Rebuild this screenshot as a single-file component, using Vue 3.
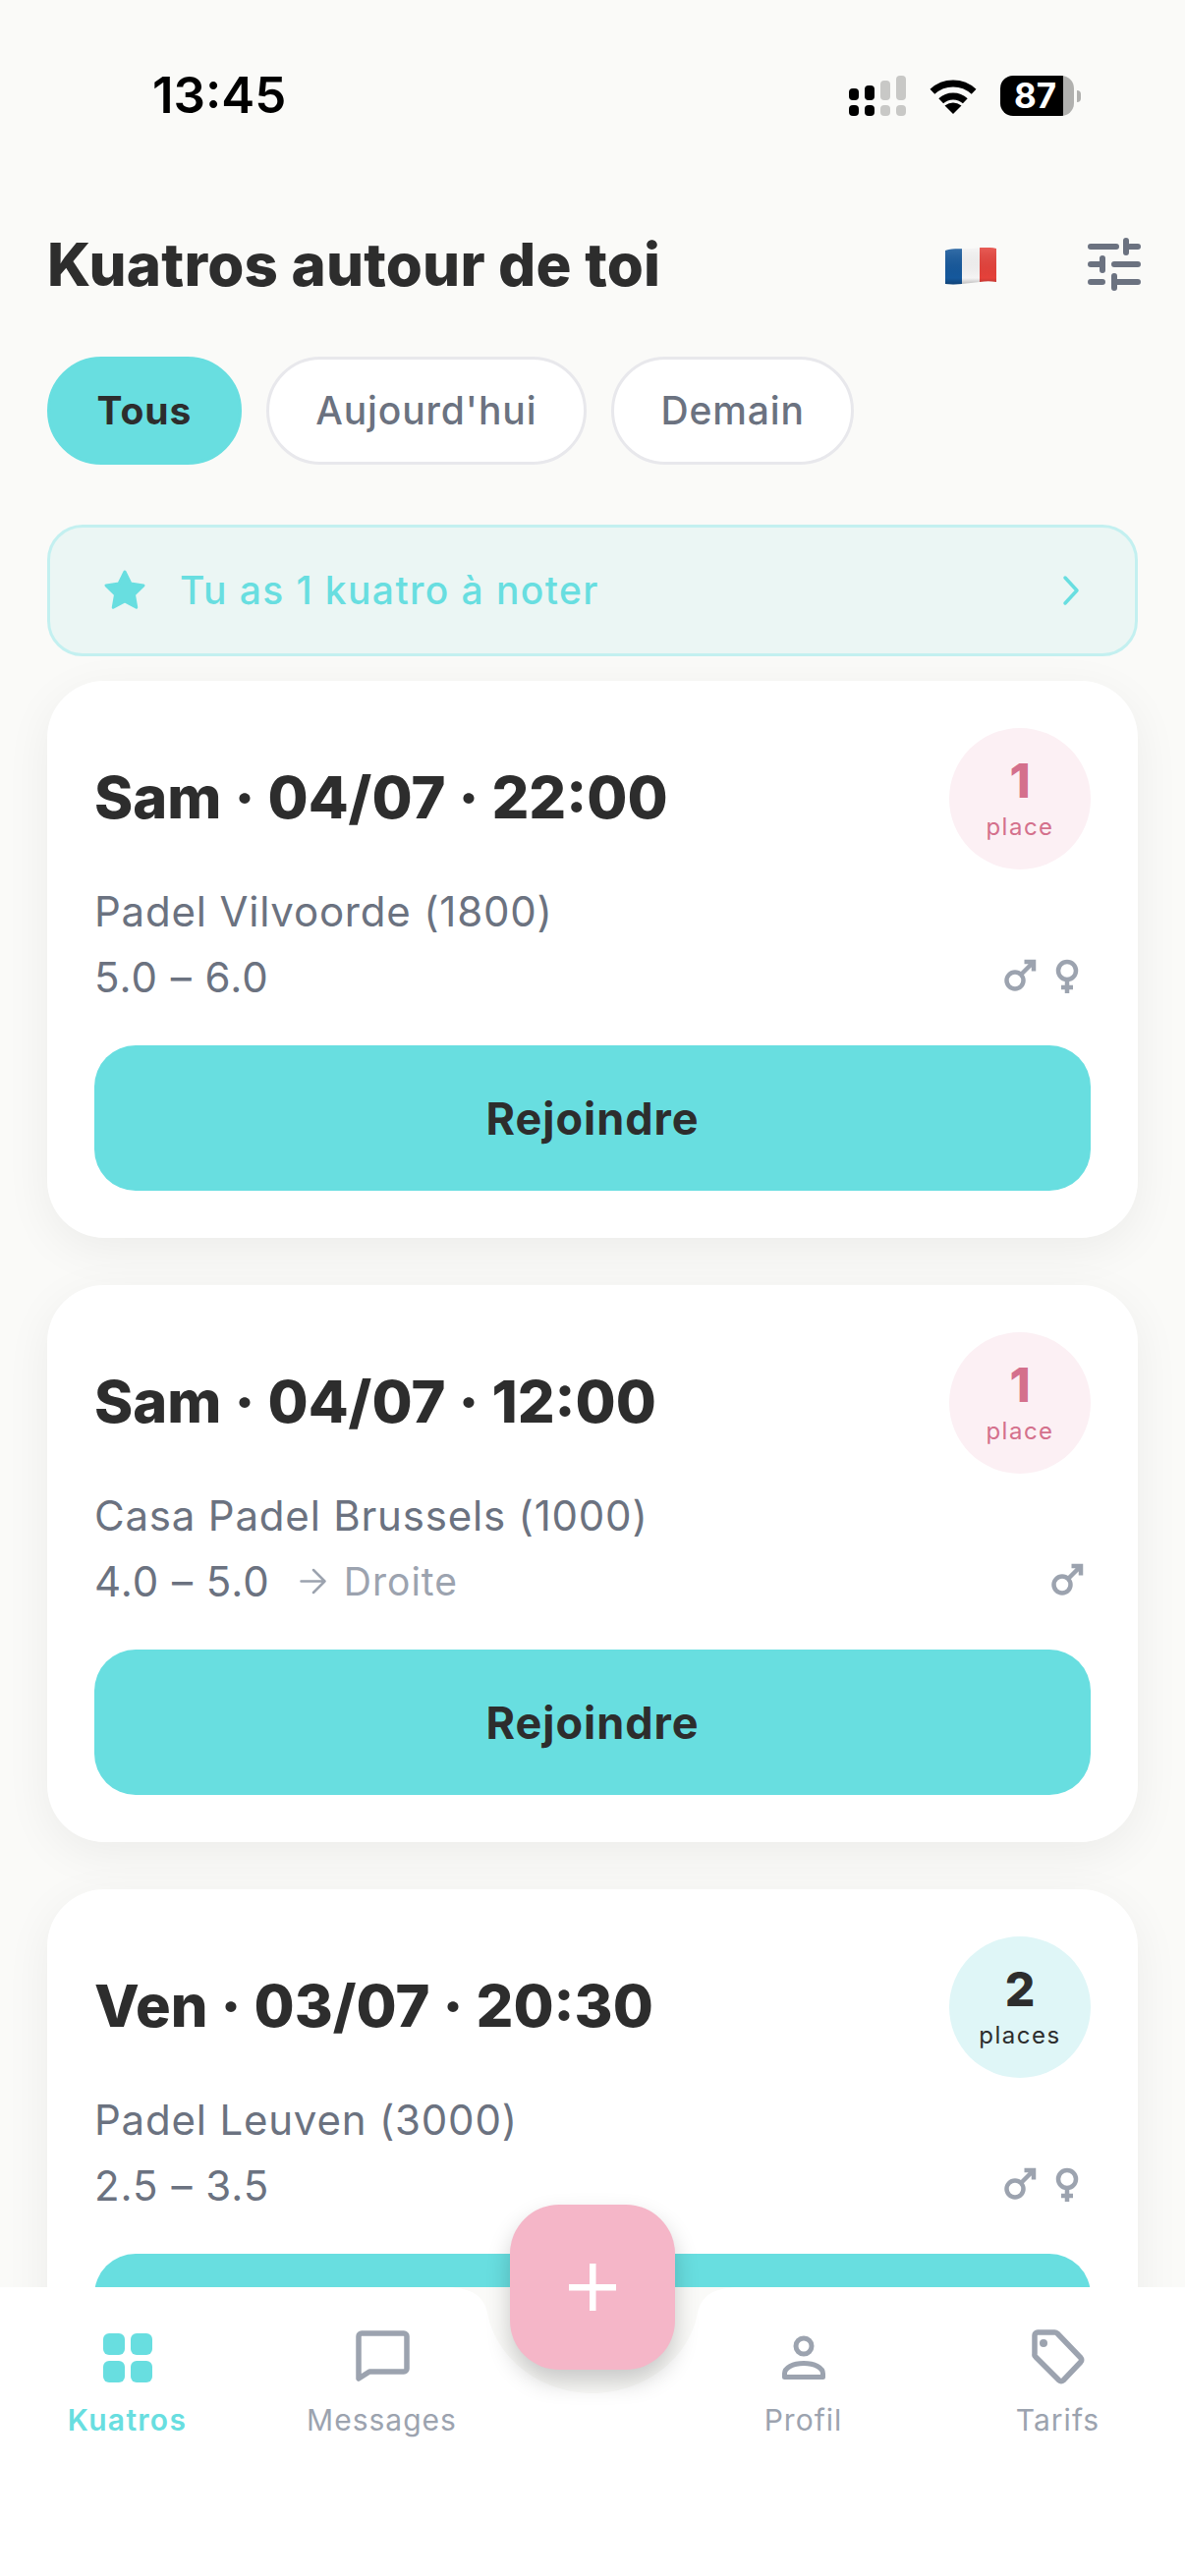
<template>
  <div class="screen">
    <div class="status">
      <span class="time">13:45</span>
      <div class="status-icons">
        <svg class="signal" width="58" height="41" viewBox="0 0 58 41">
          <g fill="#000">
            <rect x="0" y="13" width="10" height="12" rx="4"/>
            <rect x="0" y="30" width="10" height="11" rx="4"/>
            <rect x="16" y="10" width="10" height="15" rx="4"/>
            <rect x="16" y="30" width="10" height="11" rx="4"/>
          </g>
          <g fill="#c8c8c6">
            <rect x="32" y="5" width="10" height="20" rx="4"/>
            <rect x="32" y="30" width="10" height="11" rx="4"/>
            <rect x="48" y="0" width="10" height="25" rx="4"/>
            <rect x="48" y="30" width="10" height="11" rx="4"/>
          </g>
        </svg>
        <svg class="wifi" width="52" height="38" viewBox="0 0 52 38">
          <path d="M4.9 14.3A31 31 0 0 1 47.1 14.3M13.7 23.8A18 18 0 0 1 38.3 23.8" fill="none" stroke="#000" stroke-width="7"/>
          <path d="M26 37L17.500 28.500Q26 22.500 34.500 28.500Z" fill="#000"/>
        </svg>
        <div class="battery">
          <div class="battery-body"><span>87</span></div>
          <div class="battery-nub"></div>
        </div>
      </div>
    </div>

    <div class="main">
      <div class="head">
        <h1>Kuatros autour de toi</h1>
        <svg class="flag" width="52" height="38" viewBox="0 0 52 38">
          <defs>
            <clipPath id="flag-wave">
              <path d="M0 3C10 0 17 2 26 1C35 0 43 -1 52 1V35C43 33 35 35 26 36C17 37 10 38 0 37Z"/>
            </clipPath>
            <linearGradient id="flag-shade" x1="0" y1="0" x2="0" y2="1">
              <stop offset="0" stop-color="#fff" stop-opacity="0.15"/>
              <stop offset="0.8" stop-color="#000" stop-opacity="0"/>
              <stop offset="1" stop-color="#000" stop-opacity="0.3"/>
            </linearGradient>
          </defs>
          <g clip-path="url(#flag-wave)">
            <rect x="0" y="-1" width="17" height="40" fill="#15589c"/>
            <rect x="17" y="-1" width="18" height="40" fill="#f5f4f4"/>
            <rect x="35" y="-1" width="17" height="40" fill="#e5413a"/>
            <rect x="0" y="-1" width="52" height="40" fill="url(#flag-shade)"/>
          </g>
        </svg>
        <svg class="sliders" width="54" height="54" viewBox="0 0 54 54" fill="none" stroke="#6b7280" stroke-width="6" stroke-linecap="round">
          <path d="M3 9H29M43 9H51M39 3V15"/>
          <path d="M3 27H13M27 27H51M15 21V33"/>
          <path d="M3 45H15M27 45H51M27 39V51"/>
        </svg>
      </div>

      <div class="pills">
        <div v-for="(pill, i) in pills" :key="pill" class="pill" :class="{ 'pill-active': i === 0 }">{{ pill }}</div>
      </div>

      <div class="banner">
        <svg width="48" height="48" viewBox="0 0 24 24" fill="#68dee0" stroke="#68dee0" stroke-width="1.500" stroke-linejoin="round">
          <path d="M12 2.500l2.940 6L21.500 9.440l-4.750 4.630 1.120 6.540L12 17.520l-5.870 3.090 1.120-6.540L2.500 9.440l6.560-.94L12 2.500z"/>
        </svg>
        <span class="banner-text">Tu as 1 kuatro à noter</span>
        <svg width="24" height="36" viewBox="0 0 24 36" fill="none" stroke="#68dee0" stroke-width="3.500" stroke-linecap="round" stroke-linejoin="round">
          <path d="M6 5L18 18L6 31"/>
        </svg>
      </div>

      <div class="cards">
        <div v-for="card in cards" :key="card.date" class="card">
          <div class="card-top">
            <div class="date">{{ card.date }}</div>
            <div class="badge" :class="card.count === 1 ? 'badge-pink' : 'badge-teal'">
              <span class="badge-num">{{ card.count }}</span>
              <span class="badge-label">{{ card.count === 1 ? 'place' : 'places' }}</span>
            </div>
          </div>
          <div class="venue">{{ card.venue }}</div>
          <div class="meta">
            <span class="range">{{ card.range }}</span>
            <span v-if="card.side" class="side">
              <svg width="27" height="27" viewBox="0 0 27 27" fill="none" stroke="#9ca3af" stroke-width="2.500" stroke-linecap="round" stroke-linejoin="round">
                <path d="M1.500 13.500H25.500M14 2L25.500 13.500L14 25"/>
              </svg>
              {{ card.side }}
            </span>
            <span class="genders">
              <svg v-if="card.male" width="42" height="42" viewBox="0 0 42 42" fill="none" stroke="#9ca3af" stroke-width="4.500">
                <circle cx="13" cy="25" r="8.500"/>
                <path d="M19 19L32 6M22.500 6H32V15.500"/>
              </svg>
              <svg v-if="card.female" width="42" height="42" viewBox="0 0 42 42" fill="none" stroke="#9ca3af" stroke-width="4.500">
                <circle cx="18" cy="15" r="9"/>
                <path d="M18 24V38M12 32H24"/>
              </svg>
            </span>
          </div>
          <div class="join">{{ card.join }}</div>
        </div>
      </div>
    </div>

    <div class="nav">
      <svg class="notch" width="290" height="110" viewBox="0 0 290 110">
        <path d="M0 0H290C268 2 256 8 252 26C244 72 198 108 145 108C92 108 46 72 38 26C34 8 22 2 0 0Z" fill="#fafaf8"/>
      </svg>
      <div class="fab">
        <svg width="48" height="48" viewBox="0 0 48 48" fill="#fff">
          <rect x="21" y="0" width="6.500" height="48"/>
          <rect x="0" y="21" width="48" height="6.500"/>
        </svg>
      </div>

      <div class="tab tab-active">
        <svg width="66" height="66" viewBox="0 0 66 66" fill="#68dee0">
          <rect x="8" y="11" width="22" height="22" rx="6"/>
          <rect x="36" y="11" width="22" height="22" rx="6"/>
          <rect x="8" y="39" width="22" height="22" rx="6"/>
          <rect x="36" y="39" width="22" height="22" rx="6"/>
        </svg>
        <span>Kuatros</span>
      </div>
      <div class="tab">
        <svg width="66" height="66" viewBox="0 0 66 66" fill="none" stroke="#9ca3af" stroke-width="5.500" stroke-linejoin="round">
          <path d="M58 47a3 3 0 0 1-3 3H20L9 57V14a3 3 0 0 1 3-3H55a3 3 0 0 1 3 3Z"/>
        </svg>
        <span>Messages</span>
      </div>
      <div class="tab-gap"></div>
      <div class="tab">
        <svg width="66" height="66" viewBox="0 0 66 66" fill="none" stroke="#9ca3af" stroke-width="5" stroke-linejoin="round">
          <circle cx="33" cy="24" r="8"/>
          <path d="M13.500 55.500H52.500V52C52.500 46 44 41.500 33 41.500C22 41.500 13.500 46 13.500 52Z"/>
        </svg>
        <span>Profil</span>
      </div>
      <div class="tab">
        <svg width="66" height="66" viewBox="0 0 66 66" fill="none" stroke="#9ca3af" stroke-width="5.500" stroke-linejoin="round">
          <path d="M9 13a3 3 0 0 1 3-3H29a4 4 0 0 1 3 1L56 36a3 3 0 0 1 0 4L38 59a3 3 0 0 1-4 0L10 35a3 3 0 0 1-1-3Z"/>
          <circle cx="18" cy="21" r="4" fill="#9ca3af" stroke="none"/>
        </svg>
        <span>Tarifs</span>
      </div>
    </div>
  </div>
</template>

<script setup>
const pills = ['Tous', "Aujourd'hui", 'Demain']

// the third card's button label sits behind the tab bar, so it stays empty
const cards = [
  { date: 'Sam · 04/07 · 22:00', venue: 'Padel Vilvoorde (1800)', range: '5.0 – 6.0', count: 1, male: true, female: true, join: 'Rejoindre' },
  { date: 'Sam · 04/07 · 12:00', venue: 'Casa Padel Brussels (1000)', range: '4.0 – 5.0', side: 'Droite', count: 1, male: true, female: false, join: 'Rejoindre' },
  { date: 'Ven · 03/07 · 20:30', venue: 'Padel Leuven (3000)', range: '2.5 – 3.5', count: 2, male: true, female: true, join: '' },
]
</script>

<style>
html, body {
  margin: 0;
  background: #fafaf8;
}
</style>

<style scoped>
.screen {
  width: 1206px;
  height: 2622px;
  display: flex;
  flex-direction: column;
  background: #fafaf8;
  font-family: Inter, "Liberation Sans", sans-serif;
  overflow: hidden;
}
.status {
  height: 195px;
  flex-shrink: 0;
  box-sizing: border-box;
  padding: 70px 106px 0 155px;
  display: flex;
  justify-content: space-between;
  align-items: flex-start;
}
.time {
  font-size: 51px;
  line-height: 54px;
  font-weight: 600;
  color: #000;
}
.status-icons {
  display: flex;
  align-items: flex-start;
  padding-top: 7px;
}
.wifi {
  margin-left: 22px;
  margin-top: 2px;
}
.battery {
  margin-left: 22px;
  display: flex;
  align-items: center;
}
.battery-body {
  width: 75px;
  height: 41px;
  box-sizing: border-box;
  border-radius: 13px;
  background: linear-gradient(to right, #000 64px, #b0b0ae 64px);
  color: #fff;
  font-size: 35px;
  font-weight: 700;
  line-height: 41px;
  padding-left: 14px;
}
.battery-nub {
  width: 4px;
  height: 12px;
  margin-left: 3px;
  background: #b0b0ae;
  border-radius: 0 6px 6px 0;
}
.main {
  flex: 1;
  min-height: 0;
  overflow: hidden;
}
.head {
  height: 148px;
  padding: 0 45px 0 48px;
  display: flex;
  align-items: center;
}
h1 {
  margin: 0;
  flex: 1;
  font-size: 60px;
  font-weight: 800;
  letter-spacing: 0.200px;
  color: #2d2d2d;
}
.flag {
  margin-right: 93px;
  margin-top: 3px;
}
.pills {
  margin-top: 20px;
  padding: 0 48px;
  display: flex;
  gap: 25px;
}
.pill {
  height: 110px;
  box-sizing: border-box;
  padding: 0 47.500px;
  border-radius: 55px;
  border: 3px solid #e8e8ec;
  background: #fff;
  color: #6b7280;
  font-size: 39px;
  font-weight: 500;
  letter-spacing: 0.900px;
  line-height: 104px;
}
.pill-active {
  background: #68dee0;
  border-color: #68dee0;
  color: #2d2d2d;
  font-weight: 700;
}
.banner {
  margin: 61px 48px 0;
  height: 134px;
  box-sizing: border-box;
  padding: 0 53px 0 52px;
  border: 3px solid #c3f0f0;
  border-radius: 36px;
  background: #ebf6f4;
  display: flex;
  align-items: center;
  gap: 32px;
}
.banner-text {
  flex: 1;
  color: #68dee0;
  font-size: 39px;
  font-weight: 500;
  letter-spacing: 1.400px;
  margin-top: -2px;
}
.cards {
  margin-top: 25px;
  padding: 0 48px;
  display: flex;
  flex-direction: column;
  gap: 48px;
}
.card {
  flex-shrink: 0;
  height: 567px;
  box-sizing: border-box;
  padding: 48px;
  border-radius: 58px;
  background: #fff;
  box-shadow: 0 12px 48px rgba(0, 0, 0, 0.06);
}
.card-top {
  display: flex;
  justify-content: space-between;
  align-items: center;
  height: 144px;
}
.date {
  font-size: 59.500px;
  font-weight: 800;
  color: #2d2d2d;
  padding-bottom: 4px;
}
.badge {
  width: 144px;
  height: 144px;
  border-radius: 50%;
  display: flex;
  flex-direction: column;
  align-items: center;
  justify-content: center;
}
.badge-pink {
  background: #fcf0f4;
  color: #d4708c;
}
.badge-teal {
  background: #dff6f7;
  color: #2d2d2d;
}
.badge-num {
  font-size: 48px;
  line-height: 52px;
  font-weight: 800;
}
.badge-label {
  font-size: 24px;
  line-height: 30px;
  margin-top: 6px;
  letter-spacing: 1.500px;
}
.venue {
  margin-top: 10px;
  font-size: 42px;
  line-height: 66px;
  color: #6b7280;
  letter-spacing: 0.800px;
}
.meta {
  display: flex;
  align-items: center;
  height: 66px;
}
.range {
  font-size: 42px;
  color: #6b7280;
  letter-spacing: 1px;
}
.side {
  margin-left: 30px;
  display: flex;
  align-items: center;
  gap: 18px;
  font-size: 39px;
  color: #9ca3af;
  letter-spacing: 1px;
}
.genders {
  margin-left: auto;
  display: flex;
  gap: 6px;
}
.join {
  margin-top: 37px;
  height: 148px;
  border-radius: 42px;
  background: #68dee0;
  color: #2d2d2d;
  font-size: 45px;
  font-weight: 700;
  line-height: 150px;
  text-align: center;
  letter-spacing: 1px;
}
.nav {
  position: relative;
  height: 294px;
  flex-shrink: 0;
  box-sizing: border-box;
  padding-top: 36px;
  background: #fff;
  display: grid;
  grid-template-columns: 1fr 1fr 170px 1fr 1fr;
  align-items: start;
}
.notch {
  position: absolute;
  left: 458px;
  top: 0;
}
.fab {
  position: absolute;
  left: 519px;
  top: -84px;
  width: 168px;
  height: 168px;
  border-radius: 50px;
  background: #f5b6c8;
  box-shadow: 0 12px 24px rgba(0, 0, 0, 0.2);
  display: flex;
  align-items: center;
  justify-content: center;
}
.tab {
  display: flex;
  flex-direction: column;
  align-items: center;
  color: #9ca3af;
  font-size: 30px;
  line-height: 36px;
  letter-spacing: 1px;
}
.tab span {
  margin-top: 15px;
}
.tab-active {
  color: #68dee0;
  font-weight: 600;
  letter-spacing: 1.300px;
}
</style>
